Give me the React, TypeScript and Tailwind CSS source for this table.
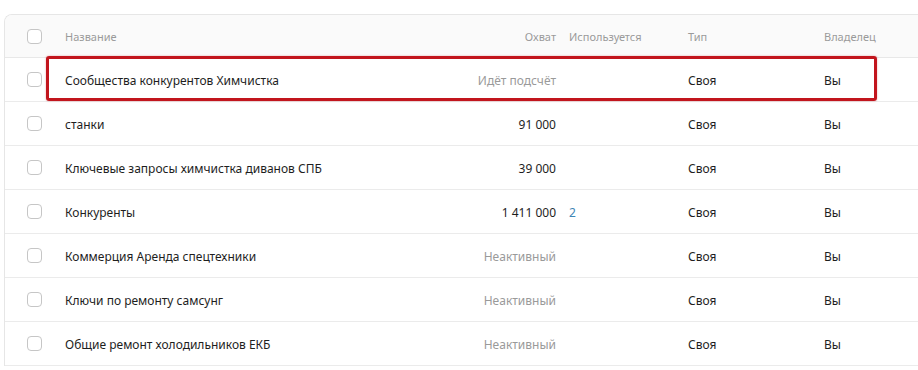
import React from "react";

type Row = {
  name: string;
  reach: string;
  reachMuted?: boolean;
  used?: string;
  type: string;
  owner: string;
};

const rows: Row[] = [
  { name: "Сообщества конкурентов Химчистка", reach: "Идёт подсчёт", reachMuted: true, type: "Своя", owner: "Вы" },
  { name: "станки", reach: "91 000", type: "Своя", owner: "Вы" },
  { name: "Ключевые запросы химчистка диванов СПБ", reach: "39 000", type: "Своя", owner: "Вы" },
  { name: "Конкуренты", reach: "1 411 000", used: "2", type: "Своя", owner: "Вы" },
  { name: "Коммерция Аренда спецтехники", reach: "Неактивный", reachMuted: true, type: "Своя", owner: "Вы" },
  { name: "Ключи по ремонту самсунг", reach: "Неактивный", reachMuted: true, type: "Своя", owner: "Вы" },
  { name: "Общие ремонт холодильников ЕКБ", reach: "Неактивный", reachMuted: true, type: "Своя", owner: "Вы" },
];

function Checkbox() {
  return <div className="w-[15px] h-[15px] rounded-[4px] border border-[#c6c6c6] bg-white" />;
}

const grid = "grid grid-cols-[60px_371px_120px_13px_119px_136px_1fr] items-center";

export default function App() {
  return (
    <div
      className="relative w-[918px] h-[370px] overflow-hidden bg-white text-[12px]"
      style={{ fontFamily: '"Noto Sans", "Open Sans", sans-serif' }}
    >
      <div className="ml-[4px] mt-[14px] w-[930px] border-l border-t border-[#e6e6e6] rounded-tl-[8px] overflow-hidden">
        <div className={`${grid} h-[43px] bg-[#fafafa] border-b border-[#e8e8e8] text-[11px] text-[#9a9a9a]`}>
          <div className="pl-[22px] pt-[1px]"><Checkbox /></div>
          <div className="pt-[2px]">Название</div>
          <div className="text-right pt-[2px]">Охват</div>
          <div />
          <div className="pt-[2px]">Используется</div>
          <div className="pt-[2px]">Тип</div>
          <div className="pt-[2px]">Владелец</div>
        </div>
        {rows.map((r, i) => (
          <div key={i} className={`${grid} h-[44px] border-b border-[#ebebeb] text-[#1e1e1e]`}>
            <div className="pl-[22px]"><Checkbox /></div>
            <div className="pt-[2px]">{r.name}</div>
            <div className={`text-right pt-[2px] ${r.reachMuted ? "text-[#9a9a9a]" : ""}`}>{r.reach}</div>
            <div />
            <div className="pt-[2px] text-[#3f86b5]">{r.used ?? ""}</div>
            <div className="pt-[2px]">{r.type}</div>
            <div className="pt-[2px]">{r.owner}</div>
          </div>
        ))}
      </div>
      <div className="absolute left-[46px] top-[56px] w-[831px] h-[45px] border-[3px] border-[#c2151d] rounded-[3px] shadow-[0_0_2px_rgba(194,21,29,0.4)]" />
    </div>
  );
}
